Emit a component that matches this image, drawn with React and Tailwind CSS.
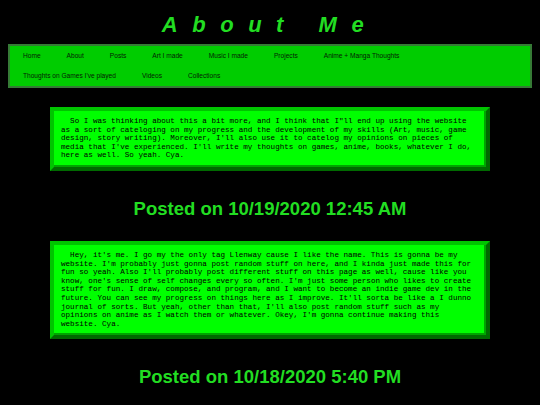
const links = [
  "Home",
  "About",
  "Posts",
  "Art I made",
  "Music I made",
  "Projects",
  "Anime + Manga Thoughts",
  "Thoughts on Games I've played",
  "Videos",
  "Collections",
];

const posts = [
  {
    body: `So I was thinking about this a bit more, and I think that I"ll end up using the website as a sort of cateloging on my progress and the development of my skills (Art, music, game design, story writing). Moreover, I'll also use it to catelog my opinions on pieces of media that I've experienced. I'll write my thoughts on games, anime, books, whatever I do, here as well. So yeah. Cya.`,
    date: "Posted on 10/19/2020 12:45 AM",
  },
  {
    body: `Hey, it's me. I go my the only tag Llenway cause I like the name. This is gonna be my website. I'm probably just gonna post random stuff on here, and I kinda just made this for fun so yeah. Also I'll probably post different stuff on this page as well, cause like you know, one's sense of self changes every so often. I'm just some person who likes to create stuff for fun. I draw, compose, and program, and I want to become an indie game dev in the future. You can see my progress on things here as I improve. It'll sorta be like a I dunno journal of sorts. But yeah, other than that, I'll also post random stuff such as my opinions on anime as I watch them or whatever. Okey, I'm gonna continue making this website. Cya.`,
    date: "Posted on 10/18/2020 5:40 PM",
  },
];

export default function App() {
  return (
    <div className="min-h-screen bg-black pb-10 font-['Liberation_Sans',Arial,sans-serif]">
      <h1 className="pt-[11px] text-center text-[22px] leading-[28px] font-bold italic tracking-[0.66em] text-[#22dd22]">
        About Me
      </h1>

      {/* nav bar */}
      <nav className="mx-2 mt-[5px] border-2 border-[#357a35] bg-[#00cc00]">
        <ul className="flex flex-wrap pr-6">
          {links.map((l) => (
            <li key={l} className="px-[13px] text-[6.6px] leading-[20px] text-[#041c04]">
              {l}
            </li>
          ))}
        </ul>
      </nav>

      {posts.map((p, i) => (
        <div key={i}>
          <div
            className={
              "mx-auto w-[440px] border-4 border-t-[#00c400] border-l-[#00c400] border-r-[#006a00] border-b-[#006a00] bg-[#00ff00] pt-[6px] pb-[7px] pl-[7px] pr-[9px] shadow-[inset_-2px_-2px_0_#00a400] " +
              (i === 0 ? "mt-[19px]" : "mt-[21px]")
            }
          >
            <p className="indent-[2ch] font-['Liberation_Mono','Courier_New',monospace] text-[7.6px] leading-[8.6px] text-black">
              {p.body}
            </p>
          </div>
          <h2 className="mt-[27px] text-center text-[18.5px] leading-[22px] font-bold text-[#22dd22]">
            {p.date}
          </h2>
        </div>
      ))}
    </div>
  );
}
